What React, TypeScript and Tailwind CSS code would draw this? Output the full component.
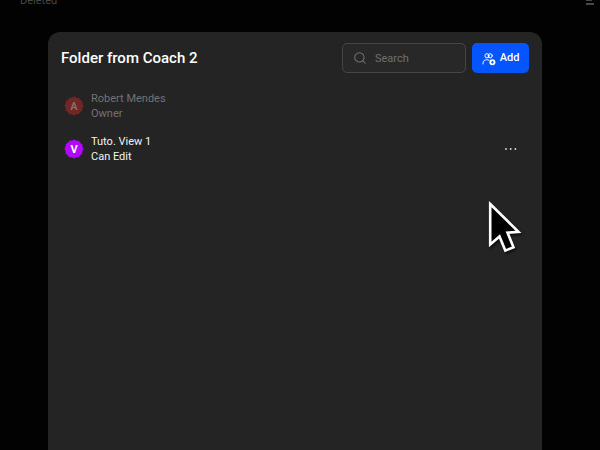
import React from 'react';
import { Search } from 'lucide-react';

const members = [
  {
    name: "Robert Mendes",
    role: "Owner",
    initial: "A",
    badge: "text-[#702726]",
    letter: "text-[#8c6a69]",
    text: "text-[#727272]",
    editable: false,
  },
  {
    name: "Tuto. View 1",
    role: "Can Edit",
    initial: "V",
    badge: "text-[#b208fb]",
    letter: "text-white",
    text: "text-[#f2f2f2]",
    editable: true,
  },
];

// Round badge with a lightly scalloped edge
const Avatar: React.FC<{ initial: string; badge: string; letter: string }> = ({ initial, badge, letter }) => (
  <div className="relative grid size-5 shrink-0 place-items-center">
    <svg viewBox="0 0 20 20" className={`absolute inset-0 size-5 ${badge}`} aria-hidden="true">
      <circle cx="10" cy="10" r="9" fill="currentColor" />
      <circle cx="10" cy="10" r="8.7" fill="none" stroke="currentColor" strokeWidth="1.8" strokeLinecap="round" strokeDasharray="0.01 4.545" />
    </svg>
    <span className={`relative text-[11px] leading-none font-bold ${letter}`}>{initial}</span>
  </div>
);

const AddUsersIcon: React.FC = () => (
  <svg viewBox="0 0 14 14" className="size-3.5 shrink-0" fill="none" stroke="currentColor" strokeWidth="1" strokeLinecap="round" aria-hidden="true">
    <circle cx="5" cy="3.8" r="2.1" />
    <circle cx="8.2" cy="3.8" r="2.1" />
    <path d="M1 12v-.8c0-2.2 1.6-3.5 3.8-3.5.8 0 1.5.2 2.1.5" />
    <circle cx="10.4" cy="10.2" r="3" fill="currentColor" stroke="none" />
    <path d="M10.4 9.2v2M9.4 10.2h2" className="stroke-[#0455fb]" />
  </svg>
);

const App: React.FC = () => {
  return (
    <div className="relative flex min-h-screen flex-col overflow-hidden bg-[#020202] font-['Roboto',sans-serif]">
      {/* Page behind the dialog, scrolled partly out of view */}
      <header className="flex h-8 items-start justify-between overflow-hidden pr-1.5 pl-5 text-[#484848]">
        <span className="-mt-[7px] text-[11px] leading-4">Deleted</span>
        <svg viewBox="0 0 8 6" className="h-1.5 w-2" fill="currentColor" aria-hidden="true">
          <path d="M0 0h6v1H0zM0 3h8v2H0z" />
        </svg>
      </header>

      <main role="dialog" aria-labelledby="folder-title" className="mr-[58px] ml-12 flex-1 rounded-t-xl bg-[#242424] px-[13px] pt-[11px]">
        <div className="flex items-center justify-between">
          <h1 id="folder-title" className="text-[15px] leading-5 font-medium text-white">Folder from Coach 2</h1>
          <div className="flex items-center gap-1.5">
            <label className="flex h-[30px] w-[124px] items-center gap-2 rounded-[5px] border border-[#454545] bg-[#282828] px-2.5">
              <Search className="size-3.5 shrink-0 text-[#707070]" strokeWidth={1.8} aria-hidden="true" />
              <input
                type="search"
                aria-label="Search"
                placeholder="Search"
                className="h-full w-full min-w-0 bg-transparent pt-px text-[11px] leading-4 text-white outline-none placeholder:text-[#707070]"
              />
            </label>
            <button type="button" className="flex h-[30px] w-[57px] items-center justify-center gap-1 rounded-[5px] bg-[#0455fb] pt-px text-[11px] font-medium text-white">
              <AddUsersIcon />
              Add
            </button>
          </div>
        </div>

        <ul className="mt-[18px] flex flex-col gap-[13px] pr-3 pl-[3px]">
          {members.map((member) => (
            <li key={member.name} className="flex items-center gap-[7px]">
              <Avatar initial={member.initial} badge={member.badge} letter={member.letter} />
              <div className={`flex-1 text-[11px] leading-[15px] ${member.text}`}>
                <p>{member.name}</p>
                <p>{member.role}</p>
              </div>
              {member.editable && (
                <button type="button" aria-label={`Options for ${member.name}`} className="text-[#e0e0e0]">
                  <svg viewBox="0 0 12 4" className="h-1 w-3" fill="currentColor" aria-hidden="true">
                    <circle cx="1" cy="2" r="0.9" />
                    <circle cx="5.7" cy="2" r="0.9" />
                    <circle cx="10.4" cy="2" r="0.9" />
                  </svg>
                </button>
              )}
            </li>
          ))}
        </ul>
      </main>

      {/* Mouse pointer */}
      <svg viewBox="0 0 36 56" className="pointer-events-none absolute top-[199px] right-[76px] h-14 w-9 drop-shadow-[1px_2px_1px_rgba(0,0,0,0.6)]" aria-hidden="true">
        <path d="M2.2 5 30.5 32.8 19.5 33.6 25.5 48.2 17.3 51.6 11.5 37.5 2.2 45.5z" fill="#000" stroke="#fff" strokeWidth="2.6" />
      </svg>
    </div>
  );
};

export default App;
